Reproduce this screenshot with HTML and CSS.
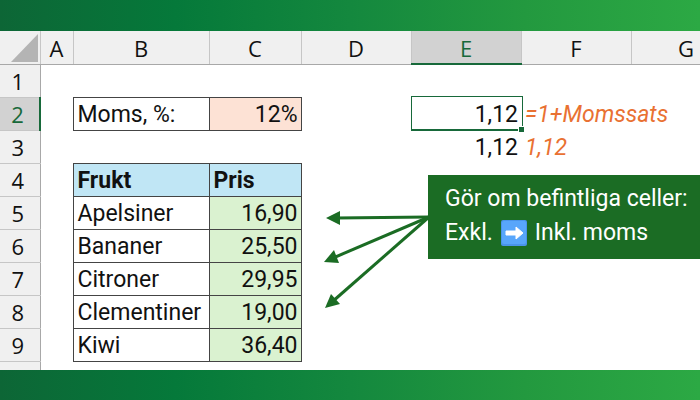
FILE: index.html
```html
<!DOCTYPE html>
<html lang="sv">
<head>
    <meta charset="UTF-8">
    <meta name="viewport" content="width=device-width, initial-scale=1.0">
    <title>Moms</title>
    <link rel="stylesheet" href="styles.css">
</head>
<body>
    <div class="band"></div>

    <main class="sheet">
        <table class="grid">
            <colgroup>
                <col class="col-head">
                <col class="col-a">
                <col class="col-b">
                <col class="col-c">
                <col class="col-wide">
                <col class="col-wide">
                <col class="col-wide">
                <col class="col-wide">
            </colgroup>
            <thead>
                <tr>
                    <td class="corner"><svg class="corner-mark" viewBox="0 0 27 28"><path d="M27 0V28H0Z" fill="#b4b4b4"/></svg></td>
                    <th scope="col">A</th>
                    <th scope="col">B</th>
                    <th scope="col">C</th>
                    <th scope="col">D</th>
                    <th scope="col" class="active">E</th>
                    <th scope="col">F</th>
                    <th scope="col">G</th>
                </tr>
            </thead>
            <tbody>
                <tr>
                    <th scope="row">1</th>
                    <td></td><td></td><td></td><td></td><td></td><td></td><td></td>
                </tr>
                <tr>
                    <th scope="row" class="active">2</th>
                    <td></td>
                    <td class="box">Moms, %:</td>
                    <td class="box number rate">12%</td>
                    <td></td>
                    <td class="number selected">1,12</td>
                    <td class="formula">=1+Momssats</td>
                    <td></td>
                </tr>
                <tr>
                    <th scope="row">3</th>
                    <td></td><td></td><td></td><td></td>
                    <td class="number">1,12</td>
                    <td class="formula">1,12</td>
                    <td></td>
                </tr>
                <tr>
                    <th scope="row">4</th>
                    <td></td>
                    <td class="box title">Frukt</td>
                    <td class="box title">Pris</td>
                    <td></td><td></td><td></td><td></td>
                </tr>
                <tr>
                    <th scope="row">5</th>
                    <td></td>
                    <td class="box">Apelsiner</td>
                    <td class="box number price">16,90</td>
                    <td></td><td></td><td></td><td></td>
                </tr>
                <tr>
                    <th scope="row">6</th>
                    <td></td>
                    <td class="box">Bananer</td>
                    <td class="box number price">25,50</td>
                    <td></td><td></td><td></td><td></td>
                </tr>
                <tr>
                    <th scope="row">7</th>
                    <td></td>
                    <td class="box">Citroner</td>
                    <td class="box number price">29,95</td>
                    <td></td><td></td><td></td><td></td>
                </tr>
                <tr>
                    <th scope="row">8</th>
                    <td></td>
                    <td class="box">Clementiner</td>
                    <td class="box number price">19,00</td>
                    <td></td><td></td><td></td><td></td>
                </tr>
                <tr>
                    <th scope="row">9</th>
                    <td></td>
                    <td class="box">Kiwi</td>
                    <td class="box number price">36,40</td>
                    <td></td><td></td><td></td><td></td>
                </tr>
                <tr>
                    <th scope="row"></th>
                    <td></td><td></td><td></td><td></td><td></td><td></td><td></td>
                </tr>
            </tbody>
        </table>

        <!-- arrows from the note to the price cells -->
        <svg class="arrows" width="106" height="100" viewBox="0 0 106 100">
            <g stroke="#1b6c24" stroke-width="3" fill="none">
                <path d="M105 10L12 11"/>
                <path d="M105 10L9 51"/>
                <path d="M105 10L8 95"/>
            </g>
            <g fill="#1b6c24">
                <path d="M2 11L16 4V18Z"/>
                <path d="M0 55L10 43L15 56Z"/>
                <path d="M1 101L7 87L16 97Z"/>
            </g>
        </svg>

        <div class="note">
            <p>Gör om befintliga celler:</p>
            <p class="note-line">
                <span>Exkl.</span>
                <svg class="note-icon" viewBox="0 0 26 26">
                    <rect width="26" height="26" rx="2" fill="#4a94ea"/>
                    <rect x="1" y="1" width="24" height="23" rx="2" fill="#58a6fb"/>
                    <path d="M5 11H15V7L22 13L15 19V15H5Z" fill="#fff" stroke="#fff" stroke-linejoin="round"/>
                </svg>
                <span>Inkl. moms</span>
            </p>
        </div>
    </main>

    <div class="band band-bottom"></div>
</body>
</html>
```

FILE: styles.css
```css
* {
    box-sizing: border-box;
}

body {
    margin: 0;
    height: 100vh;
    display: flex;
    flex-direction: column;
    font-family: Roboto, Arial, sans-serif;
    font-size: 23px;
    color: #111;
    background-color: #fff;
}

.band {
    flex: 0 0 31px;
    background: linear-gradient(to right, #0d6636, #05793a 25%, #14883e 50%, #23993f 75%, #2ca944);
}

.band-bottom {
    flex-basis: 30px;
}

.sheet {
    position: relative;
    flex: 1;
    overflow: hidden;
}

/* Grid */
.grid {
    width: 741px;
    table-layout: fixed;
    border-collapse: collapse;
}

.col-head {
    width: 40px;
}

.col-a {
    width: 33px;
}

.col-b {
    width: 136px;
}

.col-c {
    width: 92px;
}

.col-wide {
    width: 110px;
}

.grid tr {
    height: 33px;
}

.grid th,
.grid td {
    padding: 2px 4px 0;
    line-height: 28px;
    text-align: left;
    white-space: nowrap;
}

.grid th {
    padding: 0;
    font-family: "Open Sans", Arial, sans-serif;
    font-size: 22px;
    font-weight: normal;
    text-align: center;
    background-color: #f0f0f0;
    border: 1px solid #c6c6c6;
}

.grid tbody th {
    padding-right: 4px;
    border-left: none;
    border-right-color: #a8a8a8;
}

.grid thead th {
    padding-top: 2px;
    border-top: none;
    border-bottom-color: #a8a8a8;
}

.grid .corner {
    padding: 2px 2px 0 0;
    text-align: right;
    background-color: #f0f0f0;
    border-right: 1px solid #c6c6c6;
    border-bottom: 1px solid #a8a8a8;
}

.corner-mark {
    display: block;
    width: 27px;
    height: 28px;
    margin-left: auto;
}

.grid th.active {
    color: #17693a;
    background-color: #d2d2d2;
}

.grid thead th.active {
    border-bottom: 2px solid #17693a;
}

.grid tbody th.active {
    border-right: 2px solid #17693a;
}

.grid .box {
    border: 1px solid #444;
}

.grid .number {
    padding-right: 3px;
    text-align: right;
}

.rate {
    background-color: #fde2d5;
}

.price {
    background-color: #daf2d0;
}

.title {
    font-weight: bold;
    background-color: #c0e6f5;
}

.formula {
    font-style: italic;
    color: #e97132;
}

.selected {
    position: relative;
}

.selected::before {
    content: "";
    position: absolute;
    inset: -1px -2px -1px 0;
    border: 1px solid #17693a;
    border-bottom-width: 2px;
}

.selected::after {
    content: "";
    position: absolute;
    right: -3px;
    bottom: -2px;
    width: 5px;
    height: 5px;
    background-color: #17693a;
    border: 1px solid #fff;
    border-width: 1px 0 0 1px;
}

/* Note */
.arrows {
    position: absolute;
    left: 324px;
    top: 176px;
    overflow: visible;
}

.note {
    position: absolute;
    left: 428px;
    right: 0;
    top: 144px;
    padding: 7px 17px 9px;
    line-height: 34px;
    white-space: nowrap;
    color: #fff;
    background-color: #1b6c24;
}

.note p {
    margin: 0;
}

.note-line {
    display: flex;
    align-items: center;
    gap: 8px;
}

.note-icon {
    width: 26px;
    height: 26px;
}
```
